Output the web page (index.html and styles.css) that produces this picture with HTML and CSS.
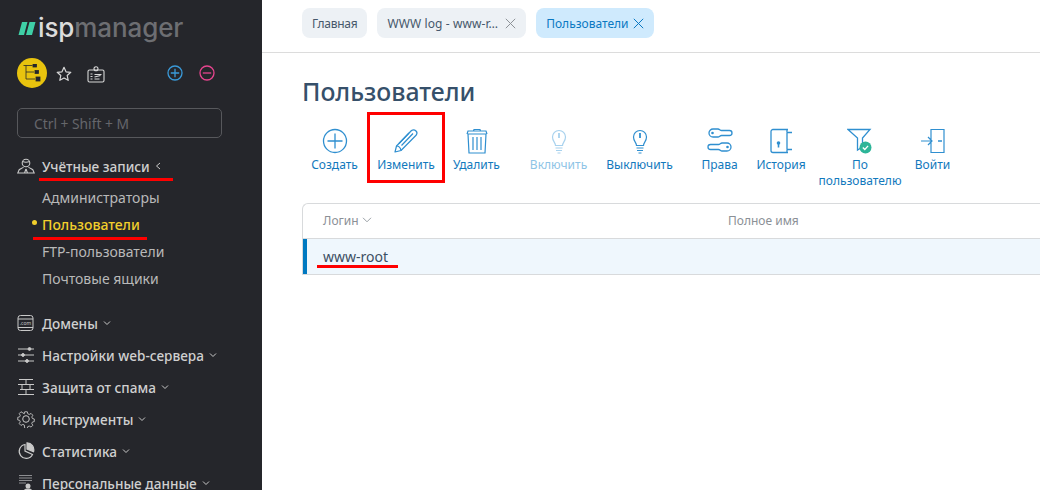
FILE: index.html
```html
<!DOCTYPE html>
<html lang="ru">
<head>
<meta charset="utf-8">
<title>ispmanager</title>
<link rel="stylesheet" href="styles.css">
</head>
<body>
<div class="app">
  <aside class="sidebar">
    <div class="logo">
      <svg class="logo-mark" width="18" height="15" viewBox="0 0 18 15"><path d="M4 1h5.500L6 14H.5zM11.500 1H17.500L14 14H8z" fill="#3fcfa6"/></svg>
      <span class="logo-isp">isp</span><span class="logo-manager">manager</span>
    </div>
    <div class="quick">
      <span class="quick-main">
        <svg width="18" height="18" viewBox="0 0 18 18" fill="none" stroke="#25262b" stroke-width=".8"><path d="M.5 1.500h9M3 1.500v13.500M3 8h8M3 15h9"/><rect x="10" y="0" width="3.500" height="3" fill="#25262b"/><rect x="12" y="6.500" width="3.500" height="3" fill="#25262b"/><rect x="13" y="13" width="4" height="4" fill="#25262b"/></svg>
      </span>
      <svg class="quick-star" width="16" height="16" viewBox="0 0 16 16" fill="none" stroke="#d8d8d8" stroke-width="1.200" stroke-linejoin="round"><path d="M8 1.300l2 4.500 4.800.5-3.600 3.200 1 4.800L8 11.900l-4.200 2.400 1-4.800L1.200 6.300 6 5.800z"/></svg>
      <svg class="quick-card" width="18" height="17" viewBox="0 0 18 17" fill="none" stroke="#d8d8d8" stroke-width="1.100"><rect x="1" y="4" width="16" height="12" rx="1.500"/><circle cx="9" cy="2.800" r="2"/><path d="M3.500 8h2M3.500 10.500h2M3.500 13h2M7.500 8.500h7M7.500 11l6-1.500M7.500 13h5"/></svg>
      <span class="quick-spacer"></span>
      <svg class="quick-plus" width="16" height="16" viewBox="0 0 16 16" fill="none" stroke="#3a9ad9" stroke-width="1.300"><circle cx="8" cy="8" r="7"/><path d="M8 3.800v8.400M3.800 8h8.400"/></svg>
      <svg class="quick-minus" width="16" height="16" viewBox="0 0 16 16" fill="none" stroke="#e8458f" stroke-width="1.300"><circle cx="8" cy="8" r="7"/><path d="M3.800 8h8.400"/></svg>
    </div>
    <div class="search">Ctrl + Shift + M</div>
    <nav class="nav">
      <div class="nav-group">
        <div class="nav-head">
          <svg class="nav-icon" width="18" height="18" viewBox="0 0 18 18" fill="none" stroke="#c9c9c9" stroke-width="1.100"><circle cx="9" cy="6" r="3.800"/><path d="M5.500 4.500c2 .8 5 .8 7 0M6.500 10c-1 1.200-3 1.700-4.500 3l-1.200 3h16.400l-1.200-3c-1.500-1.300-3.500-1.800-4.500-3M9 12l-1.500 4M9 12l1.500 4"/></svg>
          <span class="nav-label">Учётные записи</span>
          <svg class="chev" width="7" height="8" viewBox="0 0 7 8" fill="none" stroke="#c9c9c9" stroke-width="1"><path d="M5 1L1.500 4 5 7"/></svg>
        </div>
        <ul class="sub">
          <li>Администраторы</li>
          <li class="active">Пользователи</li>
          <li>FTP-пользователи</li>
          <li>Почтовые ящики</li>
        </ul>
      </div>
      <div class="nav-head">
        <svg class="nav-icon" width="18" height="18" viewBox="0 0 18 18" fill="none" stroke="#c9c9c9" stroke-width="1"><rect x="1" y="1.500" width="15" height="15" rx="2.500"/><path d="M1 5h15M1 13.500h15"/><text class="icon-com" x="8.500" y="11">.com</text></svg>
        <span class="nav-label">Домены</span>
        <svg class="chev" width="8" height="6" viewBox="0 0 8 6" fill="none" stroke="#c9c9c9" stroke-width="1"><path d="M1 1.500L4 4.500 7 1.500"/></svg>
      </div>
      <div class="nav-head">
        <svg class="nav-icon" width="18" height="18" viewBox="0 0 18 18" fill="none" stroke="#c9c9c9" stroke-width="1"><path d="M1 3h16M1 9h16M1 15h16"/><circle cx="12.500" cy="3" r="1.400" fill="#c9c9c9"/><circle cx="6" cy="9" r="1.400" fill="#c9c9c9"/><circle cx="10" cy="15" r="1.400" fill="#c9c9c9"/></svg>
        <span class="nav-label">Настройки web-сервера</span>
        <svg class="chev" width="8" height="6" viewBox="0 0 8 6" fill="none" stroke="#c9c9c9" stroke-width="1"><path d="M1 1.500L4 4.500 7 1.500"/></svg>
      </div>
      <div class="nav-head">
        <svg class="nav-icon" width="18" height="18" viewBox="0 0 18 18" fill="none" stroke="#c9c9c9" stroke-width="1"><path d="M2 1.500h14M1 6.500h16M3 11.500h14M1 16.500h16M9 1.500v5M5 6.500v5M13 6.500v5M9 11.500v5"/></svg>
        <span class="nav-label">Защита от спама</span>
        <svg class="chev" width="8" height="6" viewBox="0 0 8 6" fill="none" stroke="#c9c9c9" stroke-width="1"><path d="M1 1.500L4 4.500 7 1.500"/></svg>
      </div>
      <div class="nav-head">
        <svg class="nav-icon" width="18" height="18" viewBox="0 0 18 18" fill="none" stroke="#c9c9c9" stroke-width="1" stroke-linejoin="round"><path d="M7.500 1h3l.5 2.300 1.700.8 2.100-1.200 2 2.100-1.200 2 .7 1.700 2.200.6v3l-2.200.5-.7 1.700 1.200 2-2 2.100-2.100-1.200-1.700.7-.5 2.100h-3L7 16.200l-1.700-.7-2.100 1.200-2-2.100 1.200-2-.7-1.700L-.5 10.400v-3l2.200-.6.7-1.700-1.200-2 2-2.100 2.100 1.200L7 3.300z" transform="translate(1.200 .9) scale(.87)"/><circle cx="9" cy="9" r="3.300"/></svg>
        <span class="nav-label">Инструменты</span>
        <svg class="chev" width="8" height="6" viewBox="0 0 8 6" fill="none" stroke="#c9c9c9" stroke-width="1"><path d="M1 1.500L4 4.500 7 1.500"/></svg>
      </div>
      <div class="nav-head">
        <svg class="nav-icon" width="18" height="18" viewBox="0 0 18 18" fill="none" stroke="#c9c9c9" stroke-width="1.200"><path d="M8 2.500a7 7 0 1 0 7.500 10L8 9z"/><path d="M10 .8a7 7 0 0 1 6.500 9L10 7z" fill="#c9c9c9"/></svg>
        <span class="nav-label">Статистика</span>
        <svg class="chev" width="8" height="6" viewBox="0 0 8 6" fill="none" stroke="#c9c9c9" stroke-width="1"><path d="M1 1.500L4 4.500 7 1.500"/></svg>
      </div>
      <div class="nav-head">
        <svg class="nav-icon" width="18" height="18" viewBox="0 0 18 18" fill="none" stroke="#8d8e91" stroke-width="1.100"><path d="M2 1.500h13M2 4h13M2 6.500h13M2 9h7"/><circle cx="11" cy="12" r="2.500" fill="#c9c9c9" stroke="none"/><path d="M6 18c.5-2.500 2.500-3.500 5-3.500s4.500 1 5 3.500" fill="#c9c9c9" stroke="none"/></svg>
        <span class="nav-label">Персональные данные</span>
        <svg class="chev" width="8" height="6" viewBox="0 0 8 6" fill="none" stroke="#c9c9c9" stroke-width="1"><path d="M1 1.500L4 4.500 7 1.500"/></svg>
      </div>
    </nav>
    <span class="mark mark-accounts"></span>
    <span class="mark mark-users"></span>
  </aside>
  <main class="main">
    <div class="tabs">
      <span class="tab tab-home">Главная</span>
      <span class="tab tab-log">WWW log - www-r…<svg class="tab-x" width="11" height="11" viewBox="0 0 11 11" fill="none" stroke="#8d9297" stroke-width="1"><path d="M.8.800l9.400 9.400M10.200.800L.8 10.200"/></svg></span>
      <span class="tab tab-current">Пользователи<svg class="tab-x" width="11" height="11" viewBox="0 0 11 11" fill="none" stroke="#0a78c2" stroke-width="1"><path d="M.8.800l9.400 9.400M10.200.800L.8 10.200"/></svg></span>
    </div>
    <div class="content">
      <h1 class="title">Пользователи</h1>
      <div class="toolbar">
        <div class="tool tool-create">
          <svg width="26" height="26" viewBox="0 0 26 26" fill="none" stroke="#2f8fd0" stroke-width="1.300"><circle cx="13" cy="13" r="11.500"/><path d="M13 5.500v15M5.500 13h15"/></svg>
          <span>Создать</span>
        </div>
        <div class="tool tool-edit">
          <svg width="26" height="26" viewBox="0 0 26 26" fill="none" stroke="#2f8fd0" stroke-width="1.200" stroke-linejoin="round"><path d="M2 24l1.500-6L18.500 2.500c1.500-1 3.500-.5 4.500.5s1.200 2.700.3 4L8 22.500z"/><path d="M3.500 18c2 0 4 2 4.500 4.500M6 15.500l10-10.500M8.500 17.500L20 5.500"/></svg>
          <span>Изменить</span>
        </div>
        <div class="tool tool-delete">
          <svg width="26" height="26" viewBox="0 0 26 26" fill="none" stroke="#2f8fd0" stroke-width="1.200"><path d="M4 6h18l-1 19H5zM3 6l1-3h18l1 3M9.500 3l.5-1.500h6l.5 1.500M9 9v13M13 9v13M17 9v13"/></svg>
          <span>Удалить</span>
        </div>
        <div class="tool tool-on tool-off-state">
          <svg width="26" height="26" viewBox="0 0 26 26" fill="none" stroke="#a8d2ee" stroke-width="1.200"><path d="M9.500 17.500c0-3-3-4-3-8.500a6.500 6.500 0 0 1 13 0c0 4.500-3 5.500-3 8.500zM9.500 20h7M10 22.500h6M11.500 25h3"/><path d="M13 5v5" stroke-width="1.800"/></svg>
          <span>Включить</span>
        </div>
        <div class="tool tool-off">
          <svg width="26" height="26" viewBox="0 0 26 26" fill="none" stroke="#2f8fd0" stroke-width="1.200"><path d="M9.500 17.500c0-3-3-4-3-8.500a6.500 6.500 0 0 1 13 0c0 4.500-3 5.500-3 8.500zM9.500 20h7M10 22.500h6M11.500 25h3"/><path d="M13 5v5" stroke-width="1.800"/></svg>
          <span>Выключить</span>
        </div>
        <div class="tool tool-rights">
          <svg width="26" height="26" viewBox="0 0 26 26" fill="none" stroke="#2f8fd0" stroke-width="1.300"><path d="M6 1h5c1.500 0 2 1.500 3.500 1.500h8a2.500 2.500 0 0 1 0 5h-8c-1.500 0-2 1.500-3.500 1.500H6a4 4 0 0 1 0-8zM20 15h-5c-1.500 0-2 1.500-3.500 1.500h-8a2.500 2.500 0 0 0 0 5h8c1.500 0 2 1.500 3.500 1.500h5a4 4 0 0 0 0-8z"/><circle cx="5.500" cy="5" r="1.300" fill="#2f8fd0" stroke="none"/><circle cx="20.500" cy="19" r="1.300" fill="#2f8fd0" stroke="none"/></svg>
          <span>Права</span>
        </div>
        <div class="tool tool-history">
          <svg width="26" height="26" viewBox="0 0 26 26" fill="none" stroke="#2f8fd0" stroke-width="1.300"><path d="M20 1.500H5a2 2 0 0 0-2 2v19a2 2 0 0 0 2 2h15c-1.500 0-1.500-3 0-3h4M20 1.500c-1.500 0-1.500 3 0 3h4M19 4.500v17"/><circle cx="10.500" cy="15" r="1.800" fill="#2f8fd0" stroke="none"/><path d="M10.500 15v4.500" stroke-width="1.600"/></svg>
          <span>История</span>
        </div>
        <div class="tool tool-byuser">
          <svg width="26" height="26" viewBox="0 0 26 26" fill="none" stroke="#2f8fd0" stroke-width="1.300"><path d="M1 1.500h22l-7.500 8.500v9l-5 3V10z"/><circle cx="18.500" cy="19.500" r="6" fill="#2db598" stroke="none"/><path d="M15.800 19.500l2 2 3.300-3.600" stroke="#fff"/></svg>
          <span>По<br>пользователю</span>
        </div>
        <div class="tool tool-login">
          <svg width="26" height="26" viewBox="0 0 26 26" fill="none" stroke="#2f8fd0" stroke-width="1.200"><path d="M11 1.500h13v23H11zM11 1.500v6M1 13h11M8 9l4 4-4 4"/><path d="M18 13h4" stroke-width="1.500"/></svg>
          <span>Войти</span>
        </div>
        <span class="edit-frame"></span>
      </div>
      <div class="table">
        <div class="thead">
          <span class="col-login">Логин<svg class="sort" width="10" height="6" viewBox="0 0 10 6" fill="none" stroke="#9aa0a6" stroke-width="1"><path d="M1 .8l4 4 4-4"/></svg></span>
          <span class="col-name">Полное имя</span>
        </div>
        <div class="row">
          <span class="cell-login">www-root</span>
          <span class="mark mark-row"></span>
        </div>
      </div>
    </div>
  </main>
</div>
</body>
</html>
```

FILE: styles.css
```css
* { box-sizing: border-box; }
html, body { margin: 0; height: 100%; overflow: hidden; }
body { font-family: "Noto Sans", "Open Sans", sans-serif; background: #fff; }
ul { list-style: none; margin: 0; padding: 0; }

.app { display: flex; width: 1040px; height: 490px; overflow: hidden; }

.sidebar { position: relative; flex: 0 0 262px; height: 490px; overflow: hidden; background: #25262b; color: #c9c9c9; padding: 12px 0 0 17px; }
.logo { display: flex; align-items: center; height: 32px; margin-left: 1px; font-family: Inter, sans-serif; font-size: 26px; line-height: 30px; letter-spacing: -.1px; }
.logo-mark { margin-right: 2px; }
.logo-isp { color: #dcdcdc; font-weight: 500; }
.logo-manager { color: #6d6e72; font-weight: 500; }

.quick { display: flex; align-items: center; margin-top: 14px; height: 30px; }
.quick-main { display: flex; align-items: center; justify-content: center; width: 30px; height: 30px; border-radius: 50%; background: #e8c30e; }
.quick-star { margin: 2px 0 0 9px; }
.quick-card { margin: 2px 0 0 15px; }
.quick-spacer { width: 62px; }
.quick-minus { margin-left: 16px; }

.search { width: 205px; height: 30px; margin-top: 20px; padding-left: 16px; border: 1px solid #57585c; border-radius: 5px; color: #66676b; font-size: 13.8px; line-height: 30px; }

.nav { margin-top: 12px; }
.nav-group { margin-bottom: 15px; }
.nav-group .nav-head { margin-bottom: 2px; }
.nav-head { display: flex; align-items: center; height: 32px; }
.nav-icon { flex: none; }
.icon-com { font-size: 5px; fill: #c9c9c9; stroke: none; text-anchor: middle; }
.nav-label { margin-left: 7px; font-size: 13.6px; font-weight: 500; color: #d0d0d0; }
.chev { margin-left: 5px; }
.sub { margin-left: 25px; }
.sub li { position: relative; height: 27px; font-size: 14px; line-height: 27px; color: #b9b9b9; }
.sub .active { color: #f2cf2c; font-weight: 500; }
.sub .active::before { content: ""; position: absolute; left: -10px; top: 9px; width: 5px; height: 5px; border-radius: 50%; background: #f2cf2c; }

.mark { position: absolute; height: 3px; background: #f00; }
.mark-accounts { left: 39px; top: 178px; width: 134px; }
.mark-users { left: 33px; top: 237px; width: 114px; }
.mark-row { left: 10px; top: 26px; width: 81px; }

.main { flex: 1; min-width: 0; }
.tabs { display: flex; gap: 10px; height: 53px; padding: 8px 0 0 40px; border-bottom: 1px solid #dcdcdc; }
.tab { display: flex; align-items: center; height: 30px; padding: 0 10px; border-radius: 8px; background: #edf1f5; color: #46586b; font-size: 12px; white-space: nowrap; }
.tab-home { letter-spacing: -.25px; }
.tab-log { letter-spacing: .1px; }
.tab-current { background: #cfeafd; color: #0a78c2; }
.tab-x { margin-left: 7px; }
.tab-current .tab-x { margin-left: 4px; }

.content { padding: 0 0 0 40px; }
.title { margin: 21px 0 0; font-size: 24.8px; line-height: 34px; font-weight: 500; color: #36506a; }

.toolbar { position: relative; display: flex; height: 95px; }
.tool { display: flex; flex-direction: column; align-items: center; flex: none; padding-top: 20px; color: #1279bd; font-size: 12px; line-height: 16px; text-align: center; }
.tool span { margin-top: 3px; }
.tool-off-state { color: #8ec4e6; }
.tool-create { width: 45px; margin-left: 10px; }
.tool-edit { width: 76px; margin-left: 11px; }
.tool-delete { width: 47px; margin-left: 9px; }
.tool-on { width: 57px; margin-left: 30px; }
.tool-off { width: 67px; margin-left: 19px; }
.tool-rights { width: 35px; margin-left: 29px; }
.tool-history { width: 48px; margin-left: 20px; }
.tool-byuser { width: 84px; margin-left: 13px; }
.tool-login { width: 35px; margin-left: 13px; }
.edit-frame { position: absolute; left: 65px; top: 4px; width: 78px; height: 71px; border: 3px solid #f00; }

.table { width: 760px; border: 1px solid #d8dadc; border-right: 0; border-radius: 6px 0 0 0; }
.thead { display: flex; align-items: center; height: 35px; padding: 0 0 2px 20px; color: #8b9096; font-size: 12px; border-bottom: 1px solid #d8dadc; }
.col-login { display: flex; align-items: center; width: 405px; }
.sort { margin-left: 3px; }
.row { position: relative; display: flex; align-items: center; height: 35px; padding-left: 16px; border-left: 4px solid #0079c1; background: #eff7fd; }
.cell-login { font-size: 14px; color: #3c4f63; }
```
